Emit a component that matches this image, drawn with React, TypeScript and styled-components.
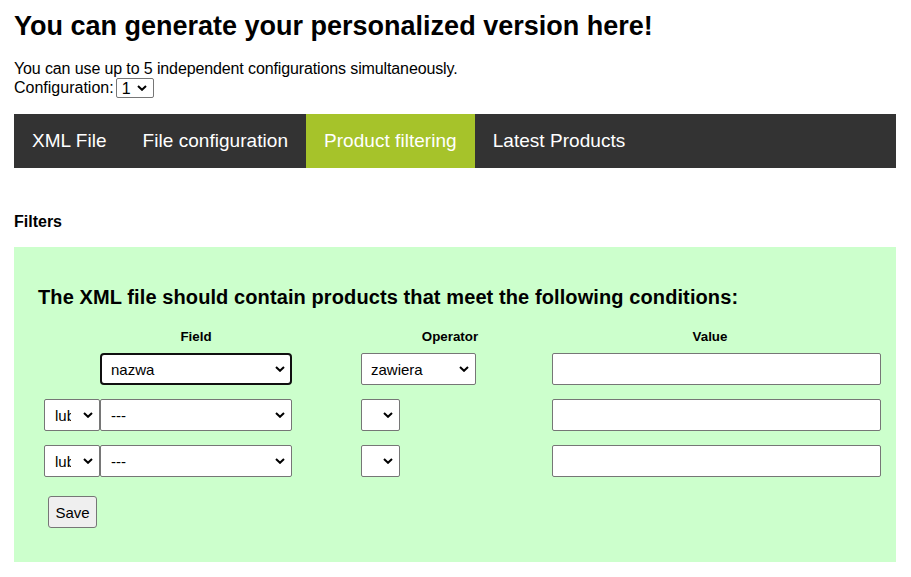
import React from 'react'
import styled, { createGlobalStyle } from 'styled-components';

const GlobalStyle = createGlobalStyle`
  body {
    margin: 0;
    background: #ffffff;
    color: #000000;
    font-family: "Liberation Sans", Arial, sans-serif;
  }
`;

const tabs = ['XML File', 'File configuration', 'Product filtering', 'Latest Products'];
const activeTab = 'Product filtering';

const rows = [
  { joiner: null, field: 'nazwa', operator: 'zawiera', focused: true },
  { joiner: 'lub', field: '---', operator: '', focused: false },
  { joiner: 'lub', field: '---', operator: '', focused: false },
];

const Chevron: React.FC = () => (
  <ChevronIcon width="10" height="6" viewBox="0 0 10 6">
    <polyline points="1,1 5,4.8 9,1" fill="none" stroke="#000" strokeWidth="2" />
  </ChevronIcon>
);

type DropdownProps = {
  value: string;
  options: string[];
  col?: number;
  width: number;
  height?: number;
  padLeft?: number;
  padRight?: number;
  focused?: boolean;
  small?: boolean;
}

const Dropdown: React.FC<DropdownProps> = ({ value, options, col, width, height = 32, padLeft = 9, padRight = 22, focused, small }) => (
  <SelectBox $col={col} $width={width} $height={height}>
    <NativeSelect defaultValue={value} $focused={focused} $padLeft={padLeft} $padRight={padRight} $small={small}>
      {options.map(o => <option key={o} value={o}>{o}</option>)}
    </NativeSelect>
    <Chevron />
  </SelectBox>
);

const App: React.FC = () => {
  return (
    <Page>
      <GlobalStyle />
      <Title>You can generate your personalized version here!</Title>
      <Intro>You can use up to 5 independent configurations simultaneously.</Intro>
      <ConfigLine>
        Configuration:
        <Dropdown value="1" options={['1', '2', '3', '4', '5']} width={38} height={20} padLeft={5} padRight={20} small />
      </ConfigLine>

      <TabBar>
        {tabs.map(t => (
          <Tab key={t} $active={t === activeTab}>{t}</Tab>
        ))}
      </TabBar>

      <SectionLabel>Filters</SectionLabel>

      <FilterPanel>
        <PanelTitle>The XML file should contain products that meet the following conditions:</PanelTitle>
        <HeaderGrid>
          <ColHead $col={2}>Field</ColHead>
          <ColHead $col={4}>Operator</ColHead>
          <ColHead $col={5}>Value</ColHead>
        </HeaderGrid>
        <RowsGrid>
          {rows.map((r, i) => (
            <React.Fragment key={i}>
              {r.joiner && (
                <Dropdown col={1} value={r.joiner} options={['lub', 'i']} width={56} padLeft={10} padRight={28} />
              )}
              <Dropdown col={2} value={r.field} options={[r.field]} width={192} padLeft={r.focused ? 9 : 10} focused={r.focused} />
              <Dropdown col={4} value={r.operator} options={[r.operator]} width={r.operator ? 115 : 39} />
              <ValueInput type="text" />
            </React.Fragment>
          ))}
        </RowsGrid>
        <SaveButton>Save</SaveButton>
      </FilterPanel>
    </Page>
  )
}

export default App;

const columns = '56px 192px 69px 178px 342px';

const Page = styled.div`
  padding: 11px 15px 40px 14px;
`;

const Title = styled.h1`
  margin: 0;
  font-size: 27px;
  font-weight: bold;
  line-height: 31px;
`;

const Intro = styled.p`
  margin: 18px 0 0;
  font-size: 16px;
  line-height: 18px;
  letter-spacing: -0.12px;
`;

const ConfigLine = styled.div`
  font-size: 16px;
  line-height: 20px;
  display: flex;
  align-items: center;
  gap: 2px;
`;

const TabBar = styled.nav`
  margin-top: 16px;
  display: flex;
  height: 54px;
  background: #333333;
`;

const Tab = styled.a<{ $active?: boolean }>`
  padding: 0 18px;
  line-height: 53px;
  font-size: 19px;
  letter-spacing: 0.04px;
  color: #ffffff;
  background: ${p => (p.$active ? '#a6c32a' : 'transparent')};
  cursor: pointer;
`;

const SectionLabel = styled.h4`
  margin: 45px 0 16px;
  font-size: 16px;
  font-weight: bold;
  line-height: 18px;
`;

const FilterPanel = styled.div`
  background: #ccffcc;
  padding: 39px 24px 34px;
`;

const PanelTitle = styled.h3`
  margin: 0;
  font-size: 20px;
  font-weight: bold;
  line-height: 23px;
  letter-spacing: 0.1px;
`;

const HeaderGrid = styled.div`
  display: grid;
  grid-template-columns: ${columns};
  margin: 20px 0 9px 6px;
`;

const ColHead = styled.div<{ $col: number }>`
  grid-column: ${p => p.$col};
  justify-self: center;
  font-size: 13.33px;
  font-weight: bold;
  line-height: 15px;
`;

const RowsGrid = styled.div`
  display: grid;
  grid-template-columns: ${columns};
  row-gap: 14px;
  margin-left: 6px;
`;

const SelectBox = styled.div<{ $col?: number; $width: number; $height: number }>`
  position: relative;
  grid-column: ${p => p.$col ?? 'auto'};
  justify-self: start;
  width: ${p => p.$width}px;
  height: ${p => p.$height}px;
`;

const NativeSelect = styled.select<{ $focused?: boolean; $padLeft: number; $padRight: number; $small?: boolean }>`
  appearance: none;
  box-sizing: border-box;
  width: 100%;
  height: 100%;
  margin: 0;
  padding: 0 ${p => p.$padRight}px 0 ${p => p.$padLeft}px;
  font-family: "Liberation Sans", Arial, sans-serif;
  font-size: ${p => (p.$small ? '16px' : '15px')};
  color: #000000;
  background: #ffffff;
  border: ${p => (p.$focused ? '2px solid #101010' : '1px solid #767676')};
  border-radius: ${p => (p.$focused ? '4px' : '2px')};
  outline: none;
`;

const ChevronIcon = styled.svg`
  position: absolute;
  right: 7px;
  top: 50%;
  margin-top: -3px;
  pointer-events: none;
`;

const ValueInput = styled.input`
  grid-column: 5;
  justify-self: end;
  box-sizing: border-box;
  width: 329px;
  height: 32px;
  border: 1px solid #767676;
  border-radius: 2px;
  background: #ffffff;
`;

const SaveButton = styled.button`
  display: block;
  margin: 19px 0 0 10px;
  width: 49px;
  height: 32px;
  font-family: "Liberation Sans", Arial, sans-serif;
  font-size: 15px;
  color: #000000;
  background: #efefef;
  border: 1px solid #767676;
  border-radius: 3px;
`;
